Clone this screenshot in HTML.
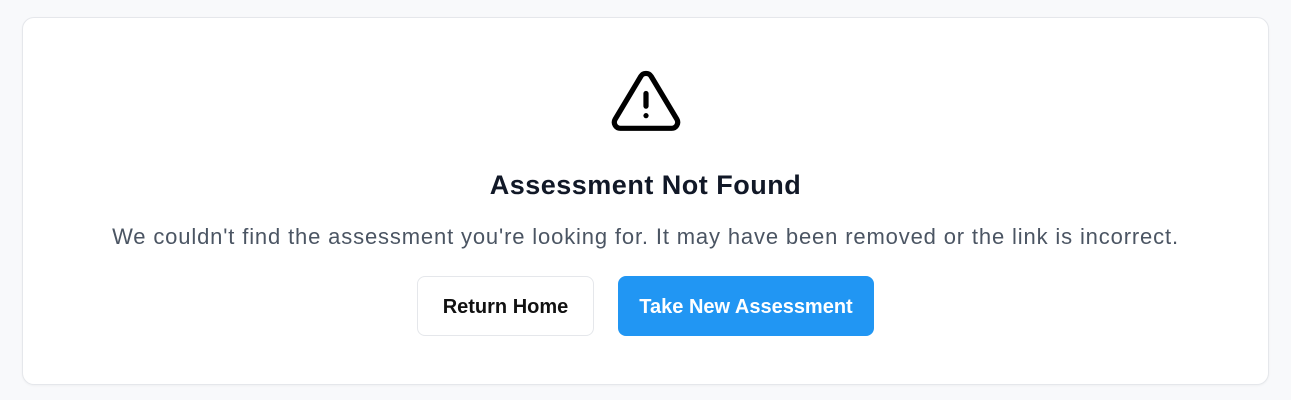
<!DOCTYPE html>
<html><head><style>
html,body{margin:0;padding:0;background:#f8f9fb;width:1291px;height:400px;overflow:hidden;font-family:"Liberation Sans",sans-serif}
.card{position:absolute;left:22px;top:17px;width:1245px;height:366px;background:#fff;border:1px solid #e5e7eb;border-radius:12px;box-shadow:0 1px 2px rgba(0,0,0,.04)}
svg{position:absolute;left:608px;top:65px}
h1{position:absolute;left:0;right:0;top:168px;margin:0;text-align:center;font-size:27px;font-weight:600;color:#111827;line-height:34px;letter-spacing:0.5px}
p{position:absolute;left:0;right:0;top:222px;margin:0;text-align:center;font-size:22px;letter-spacing:0.85px;color:#4b5563;line-height:30px}
.b{position:absolute;top:276px;height:60px;box-sizing:border-box;border-radius:8px;font-size:20px;font-weight:600;display:flex;align-items:center;justify-content:center;padding-top:3px}
.b1{left:417px;width:177px;border:1px solid #e5e7eb;color:#111;background:#fff}
.b2{left:618px;width:256px;background:#2196f3;color:#fff}
</style></head><body>
<div class="card"></div>
<svg width="76" height="76" viewBox="0 0 24 24" fill="none" stroke="#000" stroke-width="1.65" stroke-linecap="round" stroke-linejoin="round">
<path d="M12 9v4"/><path d="M10.363 3.591l-8.106 13.534a1.914 1.914 0 0 0 1.636 2.871h16.214a1.914 1.914 0 0 0 1.636 -2.87l-8.106 -13.536a1.914 1.914 0 0 0 -3.274 0z"/><path d="M12 16h.01"/>
</svg>
<h1>Assessment Not Found</h1>
<p>We couldn't find the assessment you're looking for. It may have been removed or the link is incorrect.</p>
<div class="b b1">Return Home</div>
<div class="b b2">Take New Assessment</div>
</body></html>
